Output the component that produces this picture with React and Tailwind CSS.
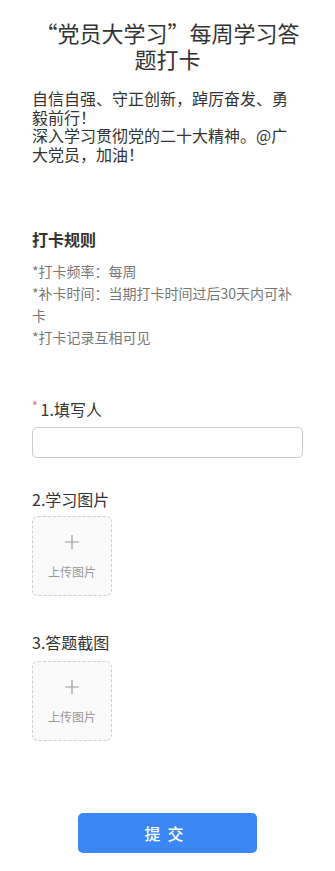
import React, { useState } from "react";

const font = { fontFamily: '"Noto Sans CJK SC", "Noto Sans", sans-serif' };

const UploadBox = () => (
  <div className="w-20 h-20 rounded-md border border-dashed border-[#cfcfcf] bg-[#fafafa] flex flex-col items-center">
    <svg className="mt-[18px]" width="14" height="14" viewBox="0 0 14 14">
      <path d="M7 0v14M0 7h14" stroke="#999" strokeWidth="1.2" fill="none" />
    </svg>
    <span className="mt-[15px] text-xs leading-4 text-[#999]">上传图片</span>
  </div>
);

const App = () => {
  const [name, setName] = useState("");

  return (
    <div className="min-h-[871px] bg-white px-8 pb-4 text-[#333]" style={font}>
      <h1 className="pt-[19px] text-center text-[22px] leading-[26px] font-normal">
        “党员大学习”每周学习答题打卡
      </h1>
      <p className="mt-[18px] text-base leading-[18.7px]">
        自信自强、守正创新，踔厉奋发、勇毅前行！
        <br />
        深入学习贯彻党的二十大精神。@广大党员，加油！
      </p>

      <h2 className="mt-[63px] text-base leading-6 font-bold">打卡规则</h2>
      <p className="mt-[9px] text-sm leading-[22px] text-[#777]">
        *打卡频率：每周
        <br />
        *补卡时间：当期打卡时间过后30天内可补卡
        <br />
        *打卡记录互相可见
      </p>

      <div className="mt-[50px] flex items-center text-base leading-[22px]">
        <span className="relative -top-[3px] mr-[3px] text-xs leading-none text-[#f56c6c]">*</span>
        <span>1.填写人</span>
      </div>
      <input
        type="text"
        value={name}
        onChange={(e) => setName(e.target.value)}
        className="mt-[7px] block w-full h-[31px] rounded-[5px] border border-[#ccc] px-3 text-sm focus:outline-none"
      />

      <div className="mt-[30px] text-base leading-[22px]">2.学习图片</div>
      <div className="mt-[6px]">
        <UploadBox />
      </div>

      <div className="mt-[35px] text-base leading-[22px]">3.答题截图</div>
      <div className="mt-[8px]">
        <UploadBox />
      </div>

      <div className="mt-[72px] flex justify-center">
        <button
          type="button"
          className="w-[179px] h-10 rounded-[5px] bg-[#3a87f5] text-white text-base tracking-[7px] font-medium"
        >
          提交
        </button>
      </div>
    </div>
  );
};

export default App;
